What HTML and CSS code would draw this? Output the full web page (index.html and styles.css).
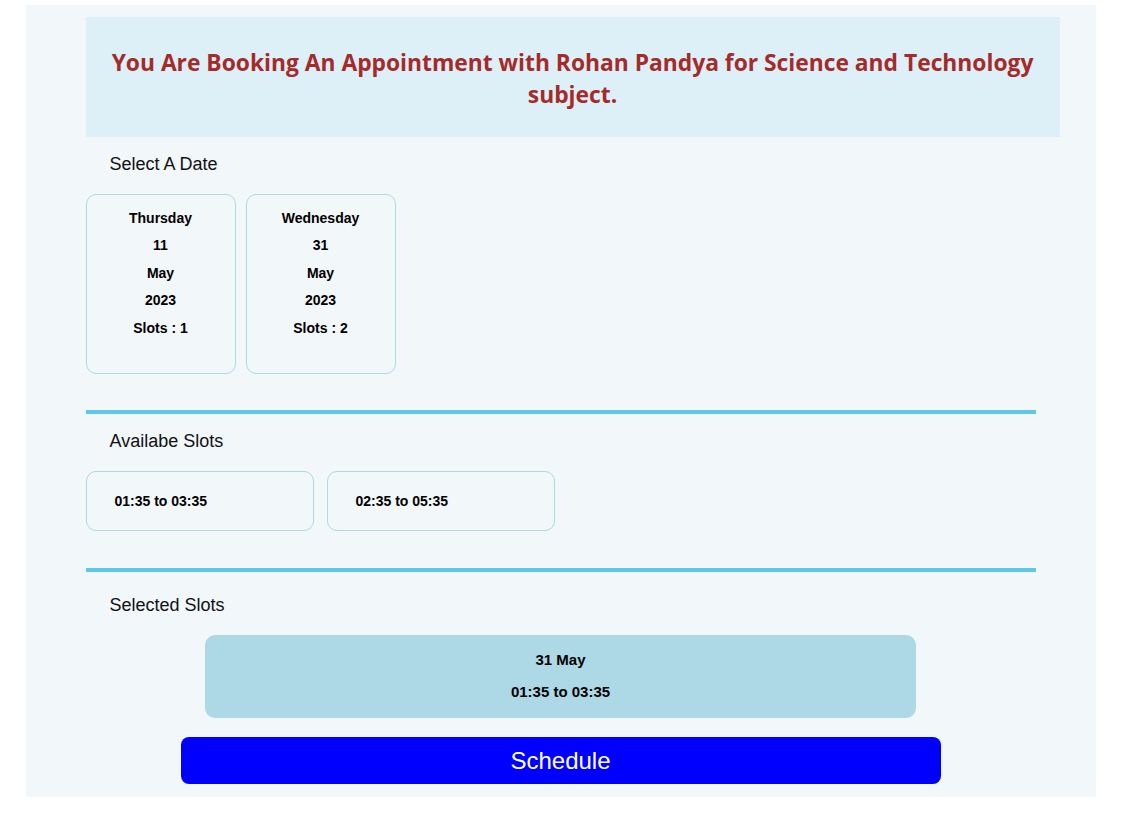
FILE: index.html
```html
<!DOCTYPE html>
<html>
<head>
<meta charset="utf-8">
<link rel="stylesheet" href="styles.css">
</head>
<body>
<div class="page">
  <div class="banner">
    <h1 class="banner-title">You Are Booking An Appointment with Rohan Pandya for Science and Technology subject.</h1>
  </div>

  <div class="section-label">Select A Date</div>
  <div class="date-list">
    <div class="date-card">
      <div>Thursday</div>
      <div>11</div>
      <div>May</div>
      <div>2023</div>
      <div>Slots : 1</div>
    </div>
    <div class="date-card">
      <div>Wednesday</div>
      <div>31</div>
      <div>May</div>
      <div>2023</div>
      <div>Slots : 2</div>
    </div>
  </div>

  <hr class="divider divider-first">

  <div class="section-label">Availabe Slots</div>
  <div class="slot-list">
    <div class="slot-card">01:35 to 03:35</div>
    <div class="slot-card">02:35 to 05:35</div>
  </div>

  <hr class="divider">

  <div class="section-label section-label-selected">Selected Slots</div>
  <div class="selected-box">
    <div>31 May</div>
    <div>01:35 to 03:35</div>
  </div>
  <button class="schedule-btn">Schedule</button>
</div>
</body>
</html>
```
FILE: styles.css
```css
html, body {
  margin: 0;
  padding: 0;
  background: #ffffff;
  font-family: "Liberation Sans", Arial, sans-serif;
}

.page {
  width: 950px;
  margin: 5px auto 0;
  padding: 12px 60px 13px 60px;
  background: #f2f7fa;
  display: flex;
  flex-direction: column;
  align-items: stretch;
}

.banner {
  background: #ddf0f7;
  margin-right: -24px;
  padding: 30px 20px 26px;
}

.banner-title {
  margin: 0;
  text-align: center;
  font-family: "Open Sans", "Noto Sans", sans-serif;
  font-weight: 700;
  font-size: 22.8px;
  line-height: 32px;
  color: #a52a2a;
}

.section-label {
  padding: 17px 24px 20px;
  font-size: 18px;
  line-height: 20px;
  color: #111;
}

.section-label-selected {
  padding: 23px 24px 20px;
}

.date-list {
  display: flex;
  gap: 10px;
}

.date-card {
  box-sizing: border-box;
  width: 150px;
  height: 180px;
  border: 1px solid #add8e6;
  border-radius: 10px;
  padding-top: 10px;
  text-align: center;
  font-weight: 700;
  font-size: 14px;
  line-height: 27.4px;
  color: #000;
}

.divider {
  margin: 37px 0 0;
  border: 0;
  height: 4px;
  background: #5fc7e8;
}

.divider-first {
  margin-top: 36px;
}

.slot-list {
  display: flex;
  gap: 13px;
}

.slot-card {
  box-sizing: border-box;
  width: 228px;
  height: 60px;
  border: 1px solid #add8e6;
  border-radius: 10px;
  padding-left: 28px;
  display: flex;
  align-items: center;
  font-weight: 700;
  font-size: 14px;
  color: #000;
}

.selected-box {
  align-self: center;
  width: 711px;
  box-sizing: border-box;
  padding: 9px 0 10px;
  background: #add8e6;
  border-radius: 10px;
  text-align: center;
  font-weight: 700;
  font-size: 15px;
  line-height: 32px;
  color: #000;
}

.schedule-btn {
  align-self: center;
  width: 760px;
  height: 47px;
  margin-top: 19px;
  border: 0;
  border-radius: 8px;
  background: #0000ff;
  color: #ffffff;
  font-family: "Liberation Sans", Arial, sans-serif;
  font-size: 24px;
  cursor: pointer;
}
```
